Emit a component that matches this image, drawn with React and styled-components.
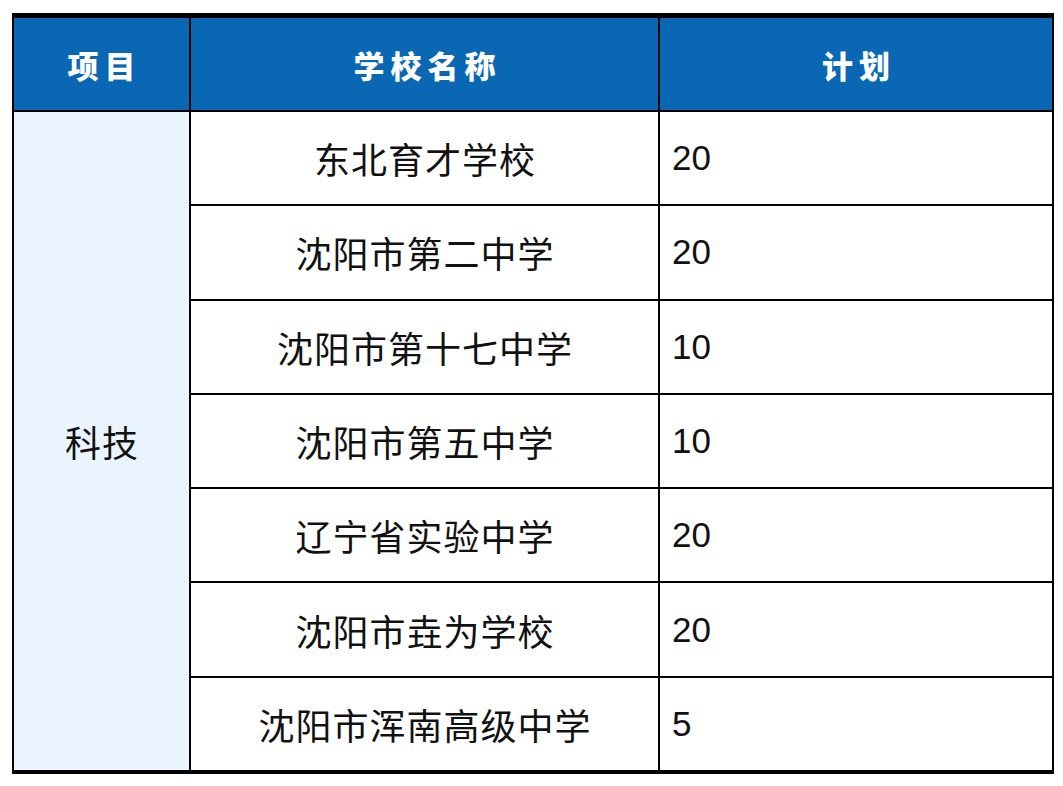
import styled, { createGlobalStyle } from 'styled-components';

const GlobalStyle = createGlobalStyle`
  html, body {
    margin: 0;
    padding: 0;
    background: #ffffff;
  }
`;

const Page = styled.div`
  padding: 13px 0 0 12px;
  font-family: "Noto Sans CJK SC", "Noto Sans", sans-serif;
`;

const Table = styled.table`
  border-collapse: separate;
  border-spacing: 0;
  width: 1042px;
  table-layout: fixed;
  border-top: 5px solid #000;
  border-left: 2px solid #000;
`;

const HeadCell = styled.th`
  box-sizing: border-box;
  height: 94px;
  padding: 0 0 0 6px;
  background: #0a67b3;
  color: #ffffff;
  font-size: 31px;
  font-weight: 900;
  letter-spacing: 6px;
  text-align: center;
  vertical-align: middle;
  border-right: 2px solid #000;
  border-bottom: 2px solid #000;
`;

const Cell = styled.td`
  box-sizing: border-box;
  height: ${p => (p.$last ? '96.3px' : '94.3px')};
  padding: ${p => (p.$num ? '0 0 0 12px' : '0 0 0 1px')};
  background: ${p => (p.$tint ? '#eaf4fe' : '#ffffff')};
  color: #111;
  font-family: ${p =>
    p.$num ? '"Liberation Sans", Arial, sans-serif' : '"Noto Sans CJK SC", sans-serif'};
  font-size: ${p => (p.$num ? '35px' : '36px')};
  letter-spacing: ${p => (p.$num ? '0' : '1px')};
  text-align: ${p => (p.$num ? 'left' : 'center')};
  vertical-align: middle;
  border-right: 2px solid #000;
  border-bottom: ${p => (p.$last ? '4px' : '2px')} solid #000;
`;

const rows = [
  ['东北育才学校', '20'],
  ['沈阳市第二中学', '20'],
  ['沈阳市第十七中学', '10'],
  ['沈阳市第五中学', '10'],
  ['辽宁省实验中学', '20'],
  ['沈阳市垚为学校', '20'],
  ['沈阳市浑南高级中学', '5'],
];

export default function App() {
  return (
    <Page>
      <GlobalStyle />
      <Table>
        <colgroup>
          <col style={{ width: 177 }} />
          <col style={{ width: 469 }} />
          <col style={{ width: 394 }} />
        </colgroup>
        <thead>
          <tr>
            <HeadCell>项目</HeadCell>
            <HeadCell>学校名称</HeadCell>
            <HeadCell>计划</HeadCell>
          </tr>
        </thead>
        <tbody>
          {rows.map(([name, plan], i) => {
            const last = i === rows.length - 1;
            return (
              <tr key={name}>
                {i === 0 && (
                  <Cell $tint $last rowSpan={rows.length}>
                    科技
                  </Cell>
                )}
                <Cell $last={last}>{name}</Cell>
                <Cell $num $last={last}>{plan}</Cell>
              </tr>
            );
          })}
        </tbody>
      </Table>
    </Page>
  );
}
